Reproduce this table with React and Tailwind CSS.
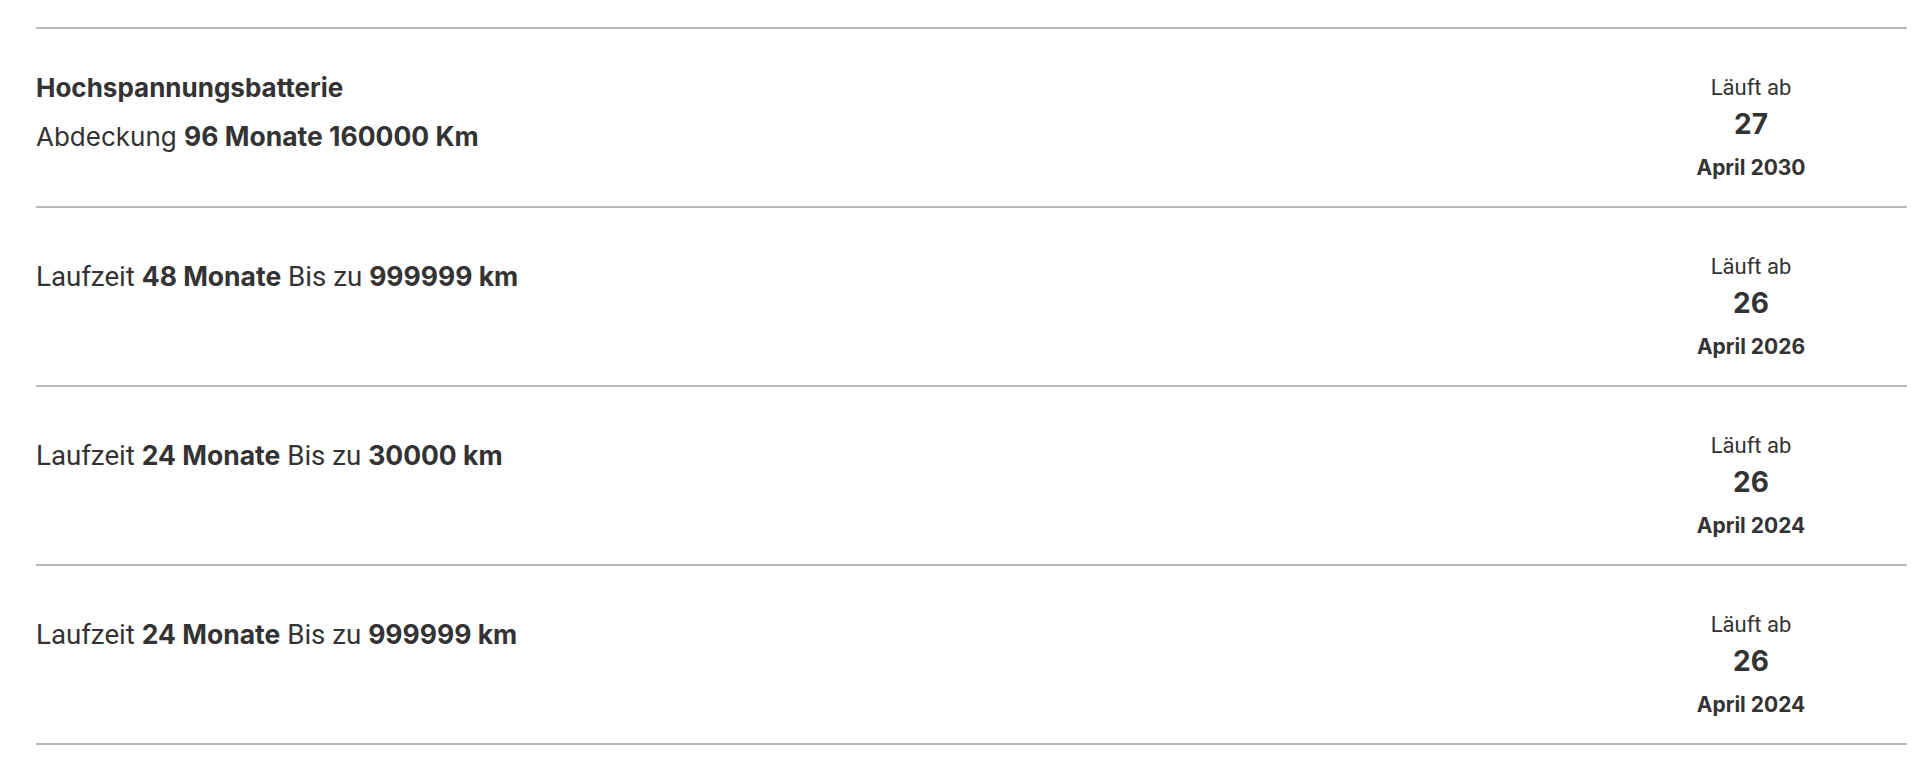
import React from "react";

const warranties = [
	{
		title: "Hochspannungsbatterie",
		parts: [
			{ t: "Abdeckung ", b: false, inter: true },
			{ t: "96 Monate 160000 Km", b: true },
		],
		day: "27",
		month: "April 2030",
	},
	{
		parts: [
			{ t: "Laufzeit ", b: false },
			{ t: "48 Monate", b: true },
			{ t: " Bis zu ", b: false },
			{ t: "999999 km", b: true },
		],
		day: "26",
		month: "April 2026",
	},
	{
		parts: [
			{ t: "Laufzeit ", b: false },
			{ t: "24 Monate", b: true },
			{ t: " Bis zu ", b: false },
			{ t: "30000 km", b: true },
		],
		day: "26",
		month: "April 2024",
	},
	{
		parts: [
			{ t: "Laufzeit ", b: false },
			{ t: "24 Monate", b: true },
			{ t: " Bis zu ", b: false },
			{ t: "999999 km", b: true },
		],
		day: "26",
		month: "April 2024",
	},
];

function Part({ part }) {
	if (part.b) {
		return <span className="font-['Inter',sans-serif] font-bold text-[26.5px]">{part.t}</span>;
	}
	if (part.inter) {
		return <span className="font-['Inter',sans-serif] font-normal">{part.t}</span>;
	}
	return <span className="font-['Roboto',sans-serif] font-normal text-[27.7px]">{part.t}</span>;
}

function WarrantyRow({ item }) {
	return (
		<div className="flex justify-between border-b-2 border-[#b8b8b8]">
			<div className="pt-[45px]">
				{item.title && (
					<p className="font-['Inter',sans-serif] font-bold text-[26px] leading-[28px] mb-[19px] whitespace-pre">
						{item.title}
					</p>
				)}
				<p className="mt-[8px] text-[26px] leading-[30px] whitespace-pre">
					{item.parts.map((p, i) => (
						<Part key={i} part={p} />
					))}
				</p>
			</div>

			{/* expiry date */}
			<div className="w-[312px] flex flex-col items-center pt-[46px] pb-[25px]">
				<span className="font-['Roboto',sans-serif] text-[22px] leading-[26px]">Läuft ab</span>
				<span className="mt-[6px] font-['Inter',sans-serif] font-bold text-[28px] leading-[34px]">
					{item.day}
				</span>
				<span className="mt-[14px] font-['Inter',sans-serif] font-bold text-[21px] leading-[26px]">
					{item.month}
				</span>
			</div>
		</div>
	);
}

export default function App() {
	return (
		<div className="min-h-screen bg-white text-[#333333] pt-[27px]">
			<div className="ml-[36px] w-[1871px] border-t-2 border-[#b8b8b8]">
				{warranties.map((w, i) => (
					<WarrantyRow key={i} item={w} />
				))}
			</div>
		</div>
	);
}
